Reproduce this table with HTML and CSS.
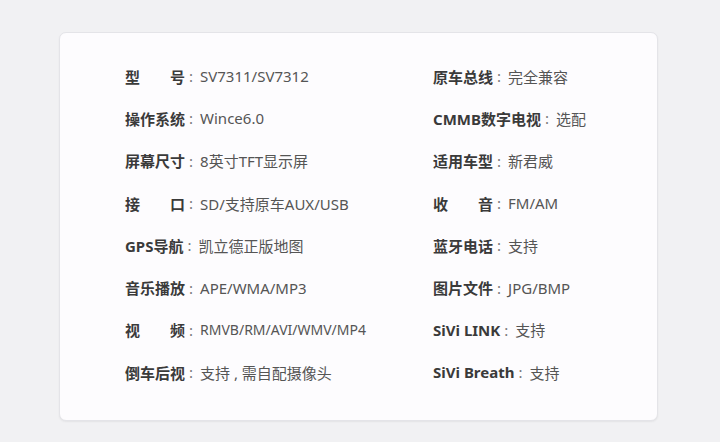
FILE: index.html
```html
<!DOCTYPE html>
<html>
<head>
  <title>产品参数</title>
  <meta charset="UTF-8">
  <meta name="viewport" content="width=device-width, initial-scale=1.0">
  <link rel="stylesheet" href="styles.css">
</head>
<body>
  <div class="card">
    <div class="specs">
      <div class="item"><span class="label spread">型号</span><span class="colon">:</span><span class="value">SV7311/SV7312</span></div>
      <div class="item"><span class="label">原车总线</span><span class="colon">:</span><span class="value">完全兼容</span></div>

      <div class="item"><span class="label">操作系统</span><span class="colon">:</span><span class="value">Wince6.0</span></div>
      <div class="item"><span class="label">CMMB数字电视</span><span class="colon">:</span><span class="value">选配</span></div>

      <div class="item"><span class="label">屏幕尺寸</span><span class="colon">:</span><span class="value">8英寸TFT显示屏</span></div>
      <div class="item"><span class="label">适用车型</span><span class="colon">:</span><span class="value">新君威</span></div>

      <div class="item"><span class="label spread">接口</span><span class="colon">:</span><span class="value">SD/支持原车AUX/USB</span></div>
      <div class="item"><span class="label spread">收音</span><span class="colon">:</span><span class="value">FM/AM</span></div>

      <div class="item"><span class="label">GPS导航</span><span class="colon">:</span><span class="value">凯立德正版地图</span></div>
      <div class="item"><span class="label">蓝牙电话</span><span class="colon">:</span><span class="value">支持</span></div>

      <div class="item"><span class="label">音乐播放</span><span class="colon">:</span><span class="value">APE/WMA/MP3</span></div>
      <div class="item"><span class="label">图片文件</span><span class="colon">:</span><span class="value">JPG/BMP</span></div>

      <div class="item"><span class="label spread">视频</span><span class="colon">:</span><span class="value small">RMVB/RM/AVI/WMV/MP4</span></div>
      <div class="item"><span class="label">SiVi LINK</span><span class="colon">:</span><span class="value">支持</span></div>

      <div class="item"><span class="label">倒车后视</span><span class="colon">:</span><span class="value">支持 , 需自配摄像头</span></div>
      <div class="item"><span class="label">SiVi Breath</span><span class="colon">:</span><span class="value">支持</span></div>
    </div>
  </div>
</body>
</html>
```

FILE: styles.css
```css
body {
  font-family: "Noto Sans", "Noto Sans CJK SC", sans-serif;
  margin: 0;
  padding: 32px 62px 21px 59px;
  background-color: #f1f1f3;
  color: #333;
}
.card {
  box-sizing: border-box;
  height: 389px;
  padding: 22px 0 0 65px;
  background-color: #fdfcfe;
  border: 1px solid #e4e4e8;
  border-radius: 7px;
  box-shadow: 0 1px 2px rgba(0, 0, 0, 0.06);
}
.specs {
  display: grid;
  grid-template-columns: 308px auto;
  grid-auto-rows: 42.3px;
}
.item {
  display: flex;
  align-items: center;
  font-size: 15px;
  white-space: nowrap;
}
.label {
  font-weight: bold;
  color: #3a3a3a;
}
.spread {
  display: inline-block;
  width: 60px;
  text-align: justify;
  text-align-last: justify;
}
.colon {
  margin: 0 7px 0 4px;
  color: #777;
  font-size: 15px;
}
.value {
  color: #555;
}
.small {
  font-size: 14px;
}
```
